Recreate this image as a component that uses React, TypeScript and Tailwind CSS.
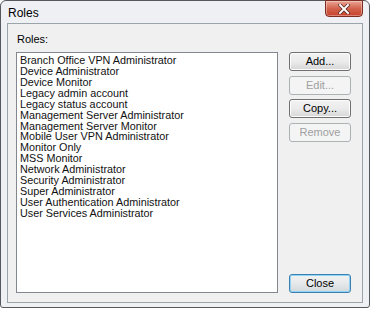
import React from "react";

const roles = [
  "Branch Office VPN Administrator",
  "Device Administrator",
  "Device Monitor",
  "Legacy admin account",
  "Legacy status account",
  "Management Server Administrator",
  "Management Server Monitor",
  "Mobile User VPN Administrator",
  "Monitor Only",
  "MSS Monitor",
  "Network Administrator",
  "Security Administrator",
  "Super Administrator",
  "User Authentication Administrator",
  "User Services Administrator",
];

const font = "font-['Liberation_Sans_Narrow','Liberation_Sans',Arial,sans-serif]";

const DlgButton: React.FC<{ label: string; disabled?: boolean; isDefault?: boolean; className?: string }> = ({
  label,
  disabled,
  isDefault,
  className = "",
}) => {
  const look = disabled
    ? "border-[#adb2b5] bg-[#f4f4f4] text-[#a0a0a0]"
    : isDefault
    ? "border-[#3c7fb1] bg-gradient-to-b from-[#f2f2f2] via-[#e6e9eb] to-[#d2d8dc] text-black shadow-[inset_0_0_0_1px_#8fd3f5]"
    : "border-[#707070] bg-gradient-to-b from-[#f2f2f2] via-[#ebebeb] to-[#d6d6d6] text-black shadow-[inset_0_0_0_1px_#fcfcfc]";
  return (
    <div
      className={`w-[62px] h-[19px] rounded-[3px] border flex items-center justify-center text-[11px] leading-none ${look} ${className}`}
    >
      {label}
    </div>
  );
};

export default function App() {
  return (
    <div className={`w-[370px] h-[310px] bg-white ${font}`}>
      {/* outer window frame */}
      <div className="w-[370px] h-[308px] border border-[#55595e] rounded-t-[6px] rounded-b-[3px] bg-[#eef0f3] flex flex-col px-[6px] pb-[4px]">
        {/* title bar */}
        <div className="h-[22px] flex justify-between shrink-0">
          <span className="text-[12px] text-black pl-[1px] pt-[6px] leading-none">Roles</span>
          <div className="w-[38px] h-[17px] -mt-px rounded-b-[4px] border border-[#7c2c22] bg-gradient-to-b from-[#eaa596] via-[#d2634d] to-[#c6412b] flex items-center justify-center shadow-[inset_0_0_0_1px_rgba(255,255,255,0.35)]">
            <svg width="12" height="10" viewBox="0 0 12 10">
              <path d="M2 1 L10 9 M10 1 L2 9" stroke="#3d1a14" strokeWidth="3.2" strokeLinecap="square" />
              <path d="M2 1 L10 9 M10 1 L2 9" stroke="#ffffff" strokeWidth="2" strokeLinecap="square" />
            </svg>
          </div>
        </div>

        {/* client area */}
        <div className="flex-1 border border-[#9ba3ab] bg-[#f0f0f0] flex flex-col pt-[9px] pl-[8px] pr-[11px]">
          <div className="h-[19px] pl-[1px] text-[11px] leading-[13px] text-black">Roles:</div>
          <div className="flex gap-[11px]">
            <div className="w-[264px] h-[241px] border border-[#828790] bg-white pt-[2px] pl-[3px]">
              {roles.map((r) => (
                <div key={r} className="text-[10.8px] leading-[10.93px] h-[10.93px] text-[#111] whitespace-nowrap">
                  {r}
                </div>
              ))}
            </div>
            <div className="flex flex-col w-[62px]">
              <DlgButton label="Add..." />
              <DlgButton label="Edit..." disabled className="mt-[5px]" />
              <DlgButton label="Copy..." className="mt-[4px]" />
              <DlgButton label="Remove" disabled className="mt-[5px]" />
              <DlgButton label="Close" isDefault className="mt-auto" />
            </div>
          </div>
        </div>
      </div>
    </div>
  );
}
